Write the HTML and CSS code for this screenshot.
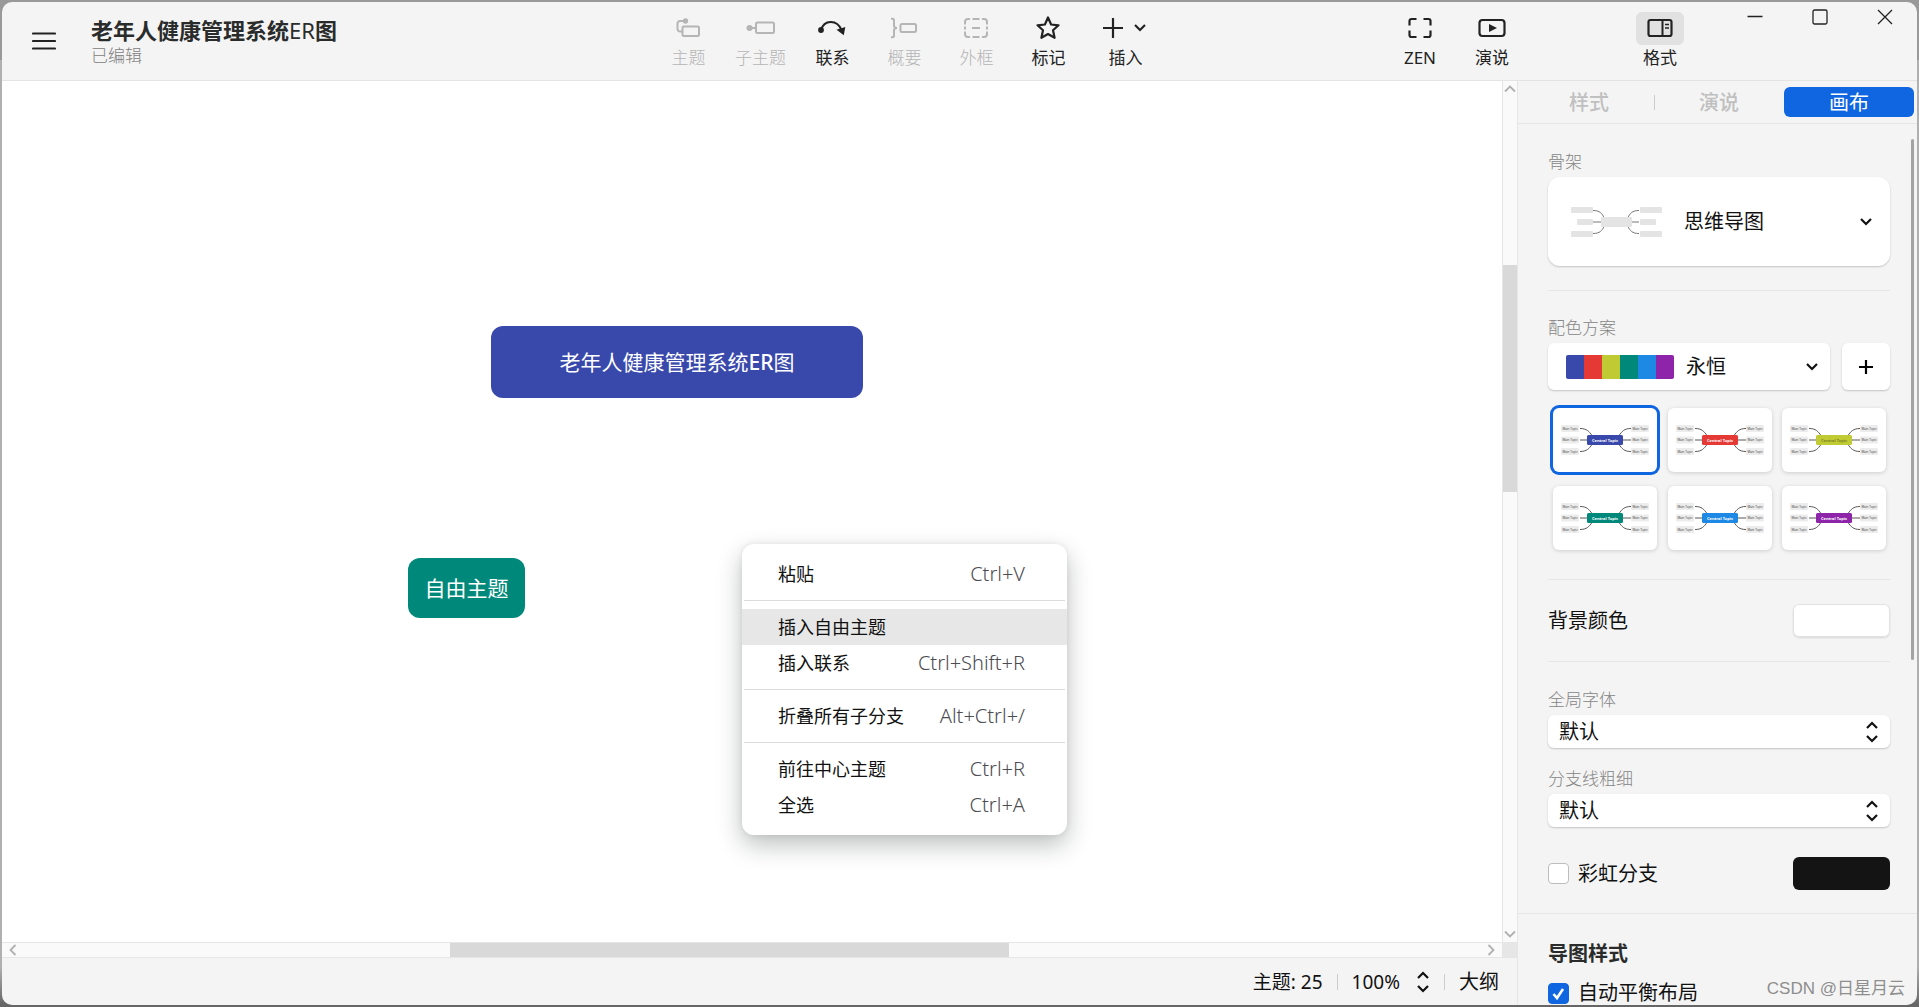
FILE: index.html
```html
<!DOCTYPE html>
<html lang="zh-CN">
<head>
<meta charset="utf-8">
<title>老年人健康管理系统ER图</title>
<link rel="stylesheet" href="styles.css">
</head>
<body>
<svg class="defs" width="0" height="0" aria-hidden="true">
  <symbol id="mini-map" viewBox="0 0 104 64">
    <g fill="none" stroke="#444" stroke-width="0.9">
      <path d="M27 20.5c7 0 9 3 12 7M27 32h8M27 43.5c7 0 9-3 12-7M78 20.5c-7 0-9 3-12 7M78 32h-8M78 43.5c-7 0-9-3-12-7"/>
    </g>
    <g fill="#ececec">
      <rect x="8" y="17" width="18" height="7" rx="1"/><rect x="8" y="28.5" width="18" height="7" rx="1"/><rect x="8" y="40" width="18" height="7" rx="1"/>
      <rect x="78" y="17" width="18" height="7" rx="1"/><rect x="78" y="28.5" width="18" height="7" rx="1"/><rect x="78" y="40" width="18" height="7" rx="1"/>
    </g>
    <rect x="34" y="27" width="36" height="10" rx="1.5" fill="currentColor"/>
  </symbol>
  <symbol id="chevron" viewBox="0 0 14 10"><path d="M2 2l5 5 5-5" fill="none" stroke="currentColor" stroke-width="2.2"/></symbol>
  <symbol id="updown" viewBox="0 0 14 22"><path d="M2 7l5-5 5 5M2 15l5 5 5-5" fill="none" stroke="currentColor" stroke-width="2.2"/></symbol>
  <symbol id="arrow" viewBox="0 0 12 12"><path d="M1 8.5l5-5 5 5" fill="none" stroke="#b0b0b0" stroke-width="1.8"/></symbol>
</svg>

<div class="window">
  <header class="header">
    <div class="header-left">
      <button class="menu-button" aria-label="菜单">
        <svg width="24" height="20" viewBox="0 0 24 20"><path d="M1 2.5h22M1 10h22M1 17.5h22" stroke="#222" stroke-width="2.2" stroke-linecap="round"/></svg>
      </button>
      <div class="doc">
        <h1 class="doc-title">老年人健康管理系统<span class="thin">ER</span>图</h1>
        <p class="doc-state">已编辑</p>
      </div>
    </div>
    <nav class="tools" aria-label="工具栏">
      <button class="tool" disabled>
        <span class="tool-icon"><svg width="26" height="24" viewBox="0 0 26 24" fill="none" stroke="currentColor" stroke-width="2"><rect x="7.5" y="10.5" width="16.5" height="9.5" rx="1.5"/><path d="M10 5H5a2.5 2.5 0 0 0-2.5 2.5V13A2.5 2.5 0 0 0 5 15.5h2"/><circle cx="10.5" cy="5" r="2.7" fill="currentColor" stroke="none"/></svg></span>
        <span>主题</span>
      </button>
      <button class="tool" disabled>
        <span class="tool-icon"><svg width="30" height="24" viewBox="0 0 30 24" fill="none" stroke="currentColor" stroke-width="2"><rect x="11" y="6.5" width="18" height="10.5" rx="1.5"/><path d="M4 12h7"/><circle cx="4.5" cy="12" r="3" fill="currentColor" stroke="none"/></svg></span>
        <span>子主题</span>
      </button>
      <button class="tool">
        <span class="tool-icon"><svg width="30" height="24" viewBox="0 0 30 24"><path d="M4 14C7 3.5 20 3 24.5 14" fill="none" stroke="currentColor" stroke-width="2"/><circle cx="4" cy="14" r="2.9" fill="currentColor"/><path d="M19.5 13.8l8.8-2.8-1.5 8.2z" fill="currentColor"/></svg></span>
        <span>联系</span>
      </button>
      <button class="tool" disabled>
        <span class="tool-icon"><svg width="28" height="24" viewBox="0 0 28 24" fill="none" stroke="currentColor" stroke-width="2"><rect x="10.5" y="8" width="15.5" height="8" rx="1.5"/><path d="M1 2.8h1.5Q4 2.8 4 4.5v5Q4 12 7 12 4 12 4 14.5v5q0 1.7-1.5 1.7H1"/></svg></span>
        <span>概要</span>
      </button>
      <button class="tool" disabled>
        <span class="tool-icon"><svg width="26" height="24" viewBox="0 0 26 24" fill="none" stroke="currentColor" stroke-width="2"><path d="M7 3H5a3 3 0 0 0-3 3v2.5M9.500 3h7M19 3h2a3 3 0 0 1 3 3v2.500M24 15.500V18a3 3 0 0 1-3 3h-2M16.500 21h-7M7 21H5a3 3 0 0 1-3-3v-2.500M2 10.500v3M24 10.500v3M9 12h8"/></svg></span>
        <span>外框</span>
      </button>
      <button class="tool">
        <span class="tool-icon"><svg width="26" height="26" viewBox="0 0 26 26"><path d="M13 2.500l3.100 7 7.400.8-5.500 5 1.600 7.500L13 19l-6.600 3.800L8 15.300l-5.500-5 7.400-.8z" fill="none" stroke="currentColor" stroke-width="2.200" stroke-linejoin="round"/></svg></span>
        <span>标记</span>
      </button>
      <button class="tool tool-insert">
        <span class="tool-icon"><svg width="20" height="20" viewBox="0 0 20 20"><path d="M10 0v20M0 10h20" stroke="currentColor" stroke-width="2.200"/></svg><svg width="14" height="10"><use href="#chevron"/></svg></span>
        <span>插入</span>
      </button>
    </nav>
    <div class="header-right">
      <button class="tool">
        <span class="tool-icon"><svg width="26" height="24" viewBox="0 0 26 24"><path d="M9.500 3H4.500a2 2 0 0 0-2 2v4.500M16.500 3h5a2 2 0 0 1 2 2v4.500M23.500 14.500V19a2 2 0 0 1-2 2h-5M9.500 21h-5a2 2 0 0 1-2-2v-4.500" fill="none" stroke="currentColor" stroke-width="2.200"/></svg></span>
        <span>ZEN</span>
      </button>
      <button class="tool">
        <span class="tool-icon"><svg width="28" height="24" viewBox="0 0 28 24"><rect x="1.500" y="4" width="25" height="16" rx="3" fill="none" stroke="currentColor" stroke-width="2.200"/><path d="M11 8l8 4-8 4z" fill="currentColor"/></svg></span>
        <span>演说</span>
      </button>
      <button class="tool tool-format">
        <span class="tool-icon active"><svg width="26" height="24" viewBox="0 0 26 24"><rect x="1.500" y="4" width="23" height="16" rx="2" fill="none" stroke="currentColor" stroke-width="2.200"/><path d="M15.500 4v16" stroke="currentColor" stroke-width="2"/><path d="M18 8.500h4M18 12h4" stroke="currentColor" stroke-width="1.500"/></svg></span>
        <span>格式</span>
      </button>
      <div class="controls">
        <button class="control" aria-label="最小化"><svg width="16" height="16" viewBox="0 0 16 16"><path d="M.5 7.500h15" stroke="#222" stroke-width="1.300"/></svg></button>
        <button class="control" aria-label="最大化"><svg width="16" height="16" viewBox="0 0 16 16"><rect x="1" y="1" width="14" height="14" rx="1.500" fill="none" stroke="#222" stroke-width="1.300"/></svg></button>
        <button class="control" aria-label="关闭"><svg width="16" height="16" viewBox="0 0 16 16"><path d="M1 1l14 14M15 1L1 15" stroke="#222" stroke-width="1.300"/></svg></button>
      </div>
    </div>
  </header>

  <div class="body">
    <main class="workspace">
      <div class="canvas">
        <div class="node node-main">老年人健康管理系统<b>ER</b>图</div>
        <div class="node node-free">自由主题</div>
        <div class="menu" role="menu">
          <button class="menu-item" role="menuitem"><span>粘贴</span><kbd>Ctrl+V</kbd></button>
          <hr>
          <button class="menu-item current" role="menuitem"><span>插入自由主题</span></button>
          <button class="menu-item" role="menuitem"><span>插入联系</span><kbd>Ctrl+Shift+R</kbd></button>
          <hr>
          <button class="menu-item" role="menuitem"><span>折叠所有子分支</span><kbd>Alt+Ctrl+/</kbd></button>
          <hr>
          <button class="menu-item" role="menuitem"><span>前往中心主题</span><kbd>Ctrl+R</kbd></button>
          <button class="menu-item" role="menuitem"><span>全选</span><kbd>Ctrl+A</kbd></button>
        </div>
      </div>
      <div class="scroll-y">
        <svg width="12" height="12"><use href="#arrow"/></svg>
        <div class="track-y"><div class="thumb"></div></div>
        <svg class="turn-down" width="12" height="12"><use href="#arrow"/></svg>
      </div>
      <div class="scroll-x">
        <svg class="turn-left" width="12" height="12"><use href="#arrow"/></svg>
        <div class="track-x"><div class="thumb"></div></div>
        <svg class="turn-right" width="12" height="12"><use href="#arrow"/></svg>
      </div>
      <div class="corner"></div>
      <footer class="status">
        <span>主题: 25</span>
        <i class="bar"></i>
        <button class="zoom">100%<svg width="14" height="22"><use href="#updown"/></svg></button>
        <i class="bar"></i>
        <button class="outline">大纲</button>
      </footer>
    </main>

    <aside class="panel">
      <div class="tabs" role="tablist">
        <button class="tab" role="tab">样式</button>
        <button class="tab divided" role="tab">演说</button>
        <button class="tab selected" role="tab" aria-selected="true">画布</button>
      </div>
      <div class="panel-scroll">
        <section class="group group-structure">
          <h2 class="caption">骨架</h2>
          <button class="card structure">
            <svg width="92" height="32" viewBox="0 0 92 32"><g fill="none" stroke="#777" stroke-width="1"><path d="M23 4.500c7 0 9 3 11 7M58 11.500c2-4 4-7 11-7M23 27.500c7 0 9-3 11-7M58 20.500c2 4 4 7 11 7"/><path d="M23 16h8M61 16h8" stroke="#bbb" stroke-width="2"/></g><g fill="#e4e4e4"><rect x="1" y="1" width="22" height="6" rx="1"/><rect x="7" y="13" width="16" height="6" rx="1"/><rect x="1" y="25" width="22" height="6" rx="1"/><rect x="31" y="11" width="31" height="10" rx="1"/><rect x="70" y="1" width="22" height="6" rx="1"/><rect x="70" y="13" width="16" height="6" rx="1"/><rect x="70" y="25" width="22" height="6" rx="1"/></g></svg>
            <span class="grow">思维导图</span>
            <svg width="14" height="10"><use href="#chevron"/></svg>
          </button>
        </section>
        <section class="group group-colors">
          <h2 class="caption">配色方案</h2>
          <div class="scheme-row">
            <button class="card scheme">
              <span class="palette"><i class="c1"></i><i class="c2"></i><i class="c3"></i><i class="c4"></i><i class="c5"></i><i class="c6"></i></span>
              <span class="grow">永恒</span>
              <svg width="14" height="10"><use href="#chevron"/></svg>
            </button>
            <button class="card add" aria-label="添加"><svg width="14" height="14" viewBox="0 0 14 14"><path d="M7 0v14M0 7h14" stroke="#000" stroke-width="2.200"/></svg></button>
          </div>
          <div class="thumbs">
            <button class="sample selected"><svg class="t1" viewBox="0 0 104 64"><use href="#mini-map"/><g class="mini-label"><text x="17" y="22">Main Topic</text><text x="17" y="33">Main Topic</text><text x="17" y="45">Main Topic</text><text x="87" y="22">Main Topic</text><text x="87" y="33">Main Topic</text><text x="87" y="45">Main Topic</text></g><text class="mini-center" x="52" y="34">Central Topic</text></svg></button>
            <button class="sample"><svg class="t2" viewBox="0 0 104 64"><use href="#mini-map"/><g class="mini-label"><text x="17" y="22">Main Topic</text><text x="17" y="33">Main Topic</text><text x="17" y="45">Main Topic</text><text x="87" y="22">Main Topic</text><text x="87" y="33">Main Topic</text><text x="87" y="45">Main Topic</text></g><text class="mini-center" x="52" y="34">Central Topic</text></svg></button>
            <button class="sample"><svg class="t3" viewBox="0 0 104 64"><use href="#mini-map"/><g class="mini-label"><text x="17" y="22">Main Topic</text><text x="17" y="33">Main Topic</text><text x="17" y="45">Main Topic</text><text x="87" y="22">Main Topic</text><text x="87" y="33">Main Topic</text><text x="87" y="45">Main Topic</text></g><text class="mini-center" x="52" y="34">Central Topic</text></svg></button>
            <button class="sample"><svg class="t4" viewBox="0 0 104 64"><use href="#mini-map"/><g class="mini-label"><text x="17" y="22">Main Topic</text><text x="17" y="33">Main Topic</text><text x="17" y="45">Main Topic</text><text x="87" y="22">Main Topic</text><text x="87" y="33">Main Topic</text><text x="87" y="45">Main Topic</text></g><text class="mini-center" x="52" y="34">Central Topic</text></svg></button>
            <button class="sample"><svg class="t5" viewBox="0 0 104 64"><use href="#mini-map"/><g class="mini-label"><text x="17" y="22">Main Topic</text><text x="17" y="33">Main Topic</text><text x="17" y="45">Main Topic</text><text x="87" y="22">Main Topic</text><text x="87" y="33">Main Topic</text><text x="87" y="45">Main Topic</text></g><text class="mini-center" x="52" y="34">Central Topic</text></svg></button>
            <button class="sample"><svg class="t6" viewBox="0 0 104 64"><use href="#mini-map"/><g class="mini-label"><text x="17" y="22">Main Topic</text><text x="17" y="33">Main Topic</text><text x="17" y="45">Main Topic</text><text x="87" y="22">Main Topic</text><text x="87" y="33">Main Topic</text><text x="87" y="45">Main Topic</text></g><text class="mini-center" x="52" y="34">Central Topic</text></svg></button>
          </div>
        </section>
        <section class="group group-background">
          <span>背景颜色</span>
          <button class="swatch white" aria-label="背景颜色"></button>
        </section>
        <section class="group group-lines">
          <label class="caption" for="font">全局字体</label>
          <div class="select-wrap"><select id="font"><option>默认</option></select><svg width="14" height="22"><use href="#updown"/></svg></div>
          <label class="caption" for="line">分支线粗细</label>
          <div class="select-wrap"><select id="line"><option>默认</option></select><svg width="14" height="22"><use href="#updown"/></svg></div>
          <div class="rainbow">
            <label class="check"><input type="checkbox">彩虹分支</label>
            <button class="swatch black" aria-label="分支颜色"></button>
          </div>
        </section>
        <section class="map-style">
          <h2 class="heading">导图样式</h2>
          <label class="check"><input type="checkbox" checked>自动平衡布局</label>
        </section>
      </div>
      <div class="panel-thumb"></div>
    </aside>
  </div>
</div>
<div class="watermark">CSDN @日星月云</div>
</body>
</html>
```
FILE: styles.css
```css
* {
  box-sizing: border-box;
}

body {
  margin: 0;
  height: 100vh;
  padding: 2px;
  overflow: hidden;
  background: linear-gradient(#999 0 60px, #b0b0b0 60px calc(100vh - 40px), #666 calc(100vh - 3px));
  font: 400 20px/24px "Noto Sans", "Noto Sans CJK SC", sans-serif;
  color: #111;
}

button,
select {
  margin: 0;
  padding: 0;
  border: 0;
  background: none;
  font: inherit;
  color: inherit;
}

h1,
h2,
p {
  margin: 0;
}

svg {
  display: block;
  flex: none;
}

.defs {
  position: absolute;
}

.window {
  display: flex;
  flex-direction: column;
  height: 100%;
  overflow: hidden;
  border-radius: 10px;
  background: #f4f4f4;
}

/* header */

.header {
  display: flex;
  flex: none;
  height: 79px;
  border-bottom: 1px solid #e4e4e4;
}

.header-left {
  display: flex;
  flex: 13 1 0;
  align-items: flex-start;
}

.menu-button {
  margin: 29px 35px 0 30px;
}

.doc {
  margin-top: 13px;
}

.doc-title {
  font-size: 22px;
  font-weight: 700;
  line-height: 30px;
  color: #2a2c2c;
}

.doc-title .thin {
  font-weight: 400;
}

.doc-state {
  font-size: 17px;
  font-weight: 300;
  line-height: 22px;
  color: #808080;
}

.tools {
  display: flex;
}

.tool {
  display: flex;
  flex-direction: column;
  align-items: center;
  width: 72px;
  padding-top: 10px;
  font-size: 17px;
  line-height: 24px;
  color: #222;
}

.tool:disabled {
  font-weight: 300;
  color: #b5b5b5;
}

.tool-icon {
  display: flex;
  align-items: center;
  justify-content: center;
  gap: 10px;
  width: 48px;
  height: 33px;
  margin-bottom: 1px;
  padding-bottom: 1px;
  border-radius: 6px;
}

.tool-icon.active {
  background: #e1e1e1;
}

.tool-insert {
  width: 82px;
}

.header-right {
  display: flex;
  flex: 15 1 0;
  justify-content: flex-end;
}

.tool-format {
  margin: 0 26px 0 96px;
}

.controls {
  display: flex;
  height: 30px;
}

.control {
  display: grid;
  place-items: center;
  width: 65px;
}

/* canvas area */

.body {
  display: flex;
  flex: 1;
  min-height: 0;
}

.workspace {
  display: grid;
  flex: 1;
  grid-template: minmax(0, 1fr) 16px 47px / minmax(0, 1fr) 15px;
}

.canvas {
  position: relative;
  background: #fff;
}

.node {
  position: absolute;
  display: grid;
  grid-auto-flow: column;
  place-content: center;
  border-radius: 12px;
  font-size: 21px;
  line-height: 28px;
  color: #fff;
}

.node b {
  font-weight: 500;
}

.node-main {
  left: 489px;
  top: 245px;
  width: 372px;
  height: 72px;
  background: #3949ab;
}

.node-free {
  left: 406px;
  top: 477px;
  width: 117px;
  height: 60px;
  background: #00897b;
}

.menu {
  position: absolute;
  left: 740px;
  top: 463px;
  width: 325px;
  padding: 12px 0;
  border-radius: 12px;
  background: #fff;
  box-shadow: 0 10px 24px rgba(20, 30, 30, 0.28), 0 0 6px rgba(0, 0, 0, 0.08);
}

.menu-item {
  display: flex;
  align-items: center;
  justify-content: space-between;
  width: 100%;
  height: 36px;
  padding: 0 42px 0 36px;
  font-size: 18px;
}

.menu-item.current {
  background: #e7e7e7;
}

.menu kbd {
  font-family: "Noto Sans", sans-serif;
  font-size: 20px;
  font-weight: 300;
  color: #4c4c52;
}

.menu hr {
  height: 1px;
  margin: 8px 2px;
  border: 0;
  background: #d9dbdc;
}

.scroll-y,
.scroll-x {
  display: flex;
  align-items: center;
  background: #fafafa;
}

.scroll-y {
  flex-direction: column;
  padding: 2px 0;
  border-left: 1px solid #e6e6e6;
}

.scroll-x {
  padding: 0 5px;
  border: solid #e6e6e6;
  border-width: 1px 0;
}

.track-y {
  flex: 1;
  width: 100%;
  padding-top: 170px;
}

.track-x {
  flex: 1;
  height: 100%;
  padding-left: 431px;
}

.thumb {
  background: #d9d9d9;
}

.track-y .thumb {
  height: 27.4%;
  min-height: 227px;
}

.track-x .thumb {
  width: 54%;
  max-width: 559px;
  height: 100%;
}

.turn-down {
  transform: rotate(180deg);
}

.turn-left {
  transform: rotate(-90deg);
}

.turn-right {
  transform: rotate(90deg);
}

.corner {
  background: #e6e6e6;
}

.status {
  display: flex;
  grid-column: 1 / -1;
  align-items: center;
  justify-content: flex-end;
  gap: 14px;
  padding-right: 18px;
  font-size: 19px;
}

.bar {
  width: 1px;
  height: 16px;
  background: #ccc;
}

.zoom {
  display: flex;
  align-items: center;
  gap: 16px;
}

.outline {
  font-size: 20px;
}

/* side panel */

.panel {
  position: relative;
  display: flex;
  flex: none;
  flex-direction: column;
  width: 400px;
  border-left: 1px solid #e6e6e6;
}

.tabs {
  display: flex;
  flex: none;
  height: 43px;
  padding: 6px 3px 6px 6px;
  border-bottom: 1px solid #e6e6e6;
}

.tab {
  position: relative;
  flex: 1;
  height: 30px;
  padding-top: 2px;
  font-weight: 500;
  color: #c0c0c0;
}

.tab.divided::before {
  position: absolute;
  left: 0;
  top: 8px;
  width: 1px;
  height: 15px;
  background: #ccc;
  content: "";
}

.tab.selected {
  border-radius: 6px;
  background: #1066e0;
  color: #fff;
  font-weight: 400;
}

.panel-scroll {
  flex: 1;
  min-height: 0;
  overflow: hidden;
}

.group {
  margin: 0 27px 0 30px;
  border-bottom: 1px solid #e6e6e6;
}

.caption {
  display: block;
  font-size: 17px;
  font-weight: 300;
  line-height: 24px;
  color: #858585;
}

.grow {
  flex: 1;
  text-align: left;
}

.card {
  display: flex;
  align-items: center;
  border-radius: 6px;
  background: #fff;
  box-shadow: 0 1px 2px rgba(0, 0, 0, 0.2);
}

.group-structure {
  padding: 26px 0 24px;
}

.structure {
  width: 100%;
  height: 89px;
  margin-top: 3px;
  padding: 0 17px 0 22px;
  gap: 22px;
  border-radius: 12px;
}

.group-colors {
  padding: 25px 0 29px;
}

.scheme-row {
  display: flex;
  gap: 12px;
  margin-top: 3px;
}

.scheme {
  flex: 1;
  height: 47px;
  padding: 0 11px 0 18px;
  gap: 12px;
}

.add {
  justify-content: center;
  width: 48px;
}

.palette {
  display: flex;
  overflow: hidden;
  height: 24px;
  border-radius: 2px;
}

.palette i {
  width: 18px;
}

.c1 { background: #3949ab; }
.c2 { background: #e53935; }
.c3 { background: #c0ca33; }
.c4 { background: #00897b; }
.c5 { background: #1e88e5; }
.c6 { background: #8e24aa; }

.thumbs {
  display: grid;
  grid-template-columns: repeat(3, 104px);
  justify-content: space-between;
  row-gap: 14px;
  padding: 18px 4px 0 5px;
}

.sample {
  height: 64px;
  border-radius: 6px;
  background: #fff;
  box-shadow: 0 1px 4px rgba(0, 0, 0, 0.16);
}

.sample.selected {
  box-shadow: 0 0 0 3px #1066e0;
}

.sample svg {
  width: 100%;
}

.mini-label {
  font-size: 3px;
  fill: #444;
  text-anchor: middle;
}

.mini-center {
  font-size: 4px;
  font-weight: 700;
  fill: #fff;
  text-anchor: middle;
}

.t1 { color: #3949ab; }
.t2 { color: #e53935; }
.t3 { color: #c0ca33; }
.t4 { color: #00897b; }
.t5 { color: #1e88e5; }
.t6 { color: #8e24aa; }

.t3 .mini-center {
  fill: #7d8420;
}

.group-background,
.rainbow {
  display: flex;
  align-items: center;
  justify-content: space-between;
}

.group-background {
  height: 82px;
}

.swatch {
  width: 97px;
  height: 33px;
  border-radius: 6px;
}

.swatch.white {
  background: #fff;
  box-shadow: inset 0 0 0 1px #e2e2e2, 0 1px 2px rgba(0, 0, 0, 0.12);
}

.swatch.black {
  background: #141414;
}

.group-lines {
  margin: 0;
  padding: 26px 27px 23px 30px;
}

.select-wrap {
  display: flex;
  align-items: center;
  height: 33px;
  margin: 3px 0 19px;
  border-radius: 6px;
  background: #fff;
  box-shadow: 0 1px 2px rgba(0, 0, 0, 0.2);
}

.select-wrap select {
  flex: 1;
  height: 33px;
  margin-right: -32px;
  padding: 0 32px 0 11px;
  appearance: none;
}

.select-wrap svg {
  margin-right: 11px;
  pointer-events: none;
}

.rainbow {
  margin-top: 30px;
}

.check {
  display: flex;
  align-items: center;
  gap: 9px;
}

.check input {
  width: 21px;
  height: 21px;
  margin: 0;
  border: 1px solid #bdbdbd;
  border-radius: 4px;
  background: #fff;
  appearance: none;
}

.check input:checked {
  border-color: #1066e0;
  background: #1066e0 url("data:image/svg+xml,%3Csvg xmlns='http://www.w3.org/2000/svg' viewBox='0 0 19 19'%3E%3Cpath d='M4.5 10l3.5 4L14 5' fill='none' stroke='white' stroke-width='2.6'/%3E%3C/svg%3E");
}

.map-style {
  padding: 27px 27px 0 30px;
}

.heading {
  margin-bottom: 14px;
  font-size: 20px;
  font-weight: 700;
  line-height: 26px;
  color: #2a2c2c;
}

.panel-thumb {
  position: absolute;
  top: 58px;
  right: 3px;
  width: 3px;
  height: 521px;
  border-radius: 2px;
  background: #a3a3a3;
}

.watermark {
  position: absolute;
  right: 14px;
  bottom: 6px;
  font: 17px/24px "Liberation Sans", "Noto Sans CJK SC", sans-serif;
  color: #8e8e8e;
}
```
